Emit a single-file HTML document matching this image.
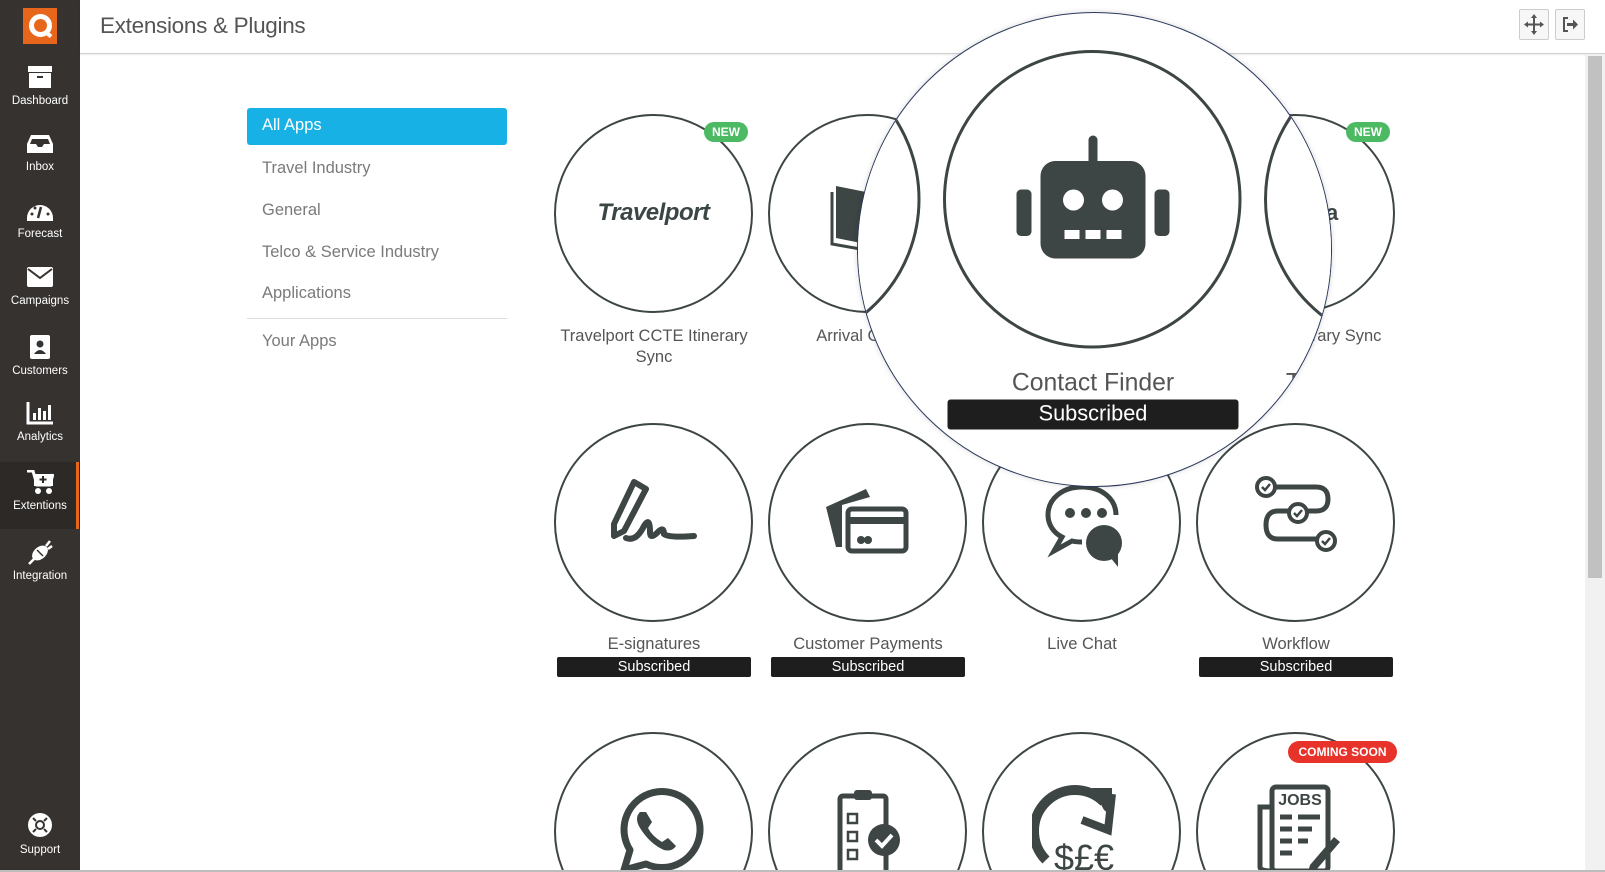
<!DOCTYPE html>
<html style="overflow:hidden;width:1605px;height:872px"><head><meta charset="utf-8"><style>
*{box-sizing:border-box;margin:0;padding:0}
html,body{width:1605px;height:872px;overflow:hidden}
body{background:#fff;font-family:"Liberation Sans",sans-serif}
#root{position:relative;width:1605px;height:872px;overflow:hidden}
.abs{position:absolute}
#side{left:0;top:0;width:80px;height:872px;background:#363230}
.si{position:absolute;left:0;width:80px;text-align:center;color:#fff;font-size:11.5px}
.si svg{display:block;margin:0 auto}
#hdr{left:80px;top:0;width:1525px;height:54px;border-bottom:1px solid #cfcfcf;box-shadow:0 1px 2px rgba(0,0,0,.08);background:#fff}
.menu{position:absolute;left:262px;font-size:16.5px;color:#7a7a7a}
.c{position:absolute;width:199px;height:199px;border:2.5px solid #3d4545;border-radius:50%;background:#fff}
.lbl{position:absolute;width:220px;text-align:center;font-size:16.5px;color:#555;line-height:21px}
.sub{position:absolute;width:194px;height:20px;background:#1e1e1e;color:#fff;text-align:center;font-size:14.5px;line-height:20px;border-radius:2px}
.new{position:absolute;width:44px;height:20px;background:#4cb963;color:#fff;border-radius:10px;font-size:12px;font-weight:bold;text-align:center;line-height:20px}
.ic{position:absolute;width:100px;height:100px}
</style></head><body><div id="root">

<div id="side" class="abs">
 <div class="abs" style="left:23px;top:8px;width:34px;height:36px;background:#e8661c">
  <div class="abs" style="left:6px;top:6px;width:23px;height:23px;border:5px solid #fff;border-radius:50%"></div>
  <div class="abs" style="left:21px;top:24px;width:8px;height:4px;background:#fff;transform:rotate(40deg)"></div>
 </div>
 <div class="si" style="top:64px"><svg width="26" height="26" viewBox="0 0 26 26"><rect x="1" y="2" width="24" height="6" fill="#fff"/><rect x="2" y="9" width="22" height="15" fill="#fff"/><rect x="10" y="12" width="6" height="2" fill="#363230"/></svg><div style="margin-top:5px">Dashboard</div></div>
 <div class="si" style="top:131px"><svg width="28" height="26" viewBox="0 0 28 26"><path d="M5 4h18l4 9v9H1v-9z" fill="#fff"/><path d="M6 8h16l2 5h-6l-2 3h-4l-2-3H4z" fill="#363230"/></svg><div style="margin-top:4px">Inbox</div></div>
 <div class="si" style="top:198px"><svg width="28" height="26" viewBox="0 0 28 26"><path d="M1 20A13 13 0 0 1 27 20v3H1z" fill="#fff"/><path d="M15 9l-3 11" stroke="#363230" stroke-width="2.5"/><circle cx="6" cy="16" r="1.5" fill="#363230"/><circle cx="22" cy="16" r="1.5" fill="#363230"/><circle cx="9" cy="10" r="1.5" fill="#363230"/></svg><div style="margin-top:4px">Forecast</div></div>
 <div class="si" style="top:265px"><svg width="28" height="24" viewBox="0 0 28 24"><rect x="1" y="2" width="26" height="20" rx="2" fill="#fff"/><path d="M2 4l12 9 12-9" stroke="#363230" stroke-width="2" fill="none"/></svg><div style="margin-top:6px">Campaigns</div></div>
 <div class="si" style="top:334px"><svg width="24" height="26" viewBox="0 0 24 26"><rect x="2" y="1" width="20" height="24" rx="2" fill="#fff"/><circle cx="12" cy="10" r="3.5" fill="#363230"/><path d="M6 20q6-8 12 0z" fill="#363230"/></svg><div style="margin-top:5px">Customers</div></div>
 <div class="si" style="top:401px"><svg width="28" height="24" viewBox="0 0 28 24"><path d="M2 1v21h25" stroke="#fff" stroke-width="3" fill="none"/><rect x="7" y="12" width="3" height="7" fill="#fff"/><rect x="12" y="7" width="3" height="12" fill="#fff"/><rect x="17" y="10" width="3" height="9" fill="#fff"/><rect x="22" y="4" width="3" height="15" fill="#fff"/></svg><div style="margin-top:6px">Analytics</div></div>
 <div class="abs" style="left:0;top:462px;width:80px;height:67px;background:#2c2927"></div>
 <div class="abs" style="left:76px;top:462px;width:3px;height:67px;background:#e8661c"></div>
 <div class="si" style="top:470px"><svg width="28" height="26" viewBox="0 0 28 26"><path d="M1 1h6l4 14h13l3-11" stroke="#fff" stroke-width="3" fill="none"/><rect x="8" y="4" width="19" height="12" fill="#fff"/><path d="M17 6v7M13.5 9.5h7" stroke="#2c2927" stroke-width="2"/><circle cx="12" cy="21" r="3" fill="#fff"/><circle cx="23" cy="21" r="3" fill="#fff"/></svg><div style="margin-top:4px">Extentions</div></div>
 <div class="si" style="top:540px"><svg width="28" height="26" viewBox="0 0 28 26"><ellipse cx="14" cy="13" rx="9" ry="6" transform="rotate(-40 14 13)" fill="#fff"/><path d="M3 24l5-5M20 6l4-5M22 9l4-3" stroke="#fff" stroke-width="2.5"/><path d="M11 10l6 6" stroke="#363230" stroke-width="1.5"/></svg><div style="margin-top:4px">Integration</div></div>
 <div class="si" style="top:812px"><svg width="26" height="26" viewBox="0 0 26 26"><circle cx="13" cy="13" r="12" fill="#fff"/><circle cx="13" cy="13" r="5" fill="#363230"/><circle cx="13" cy="13" r="3" fill="#fff"/><path d="M6 6l3 3M20 6l-3 3M6 20l3-3M20 20l-3-3" stroke="#363230" stroke-width="2"/></svg><div style="margin-top:6px">Support</div></div>
</div>

<div id="hdr" class="abs">
 <div class="abs" style="left:20px;top:13px;font-size:22.5px;color:#555;letter-spacing:-.3px">Extensions &amp; Plugins</div>
 <div class="abs" style="left:1439px;top:9px;width:30px;height:31px;border:1px solid #ccc;border-radius:2px;background:#f7f7f7"><svg width="28" height="29" viewBox="0 0 28 29"><path d="M14 6v17M6 14.5h16" stroke="#555" stroke-width="2"/><path d="M14 4l-3 4h6zM14 25l-3-4h6zM4 14.5l4-3v6zM24 14.5l-4-3v6z" fill="#555"/></svg></div>
 <div class="abs" style="left:1475px;top:9px;width:30px;height:31px;border:1px solid #ccc;border-radius:2px;background:#f7f7f7"><svg width="28" height="29" viewBox="0 0 28 29"><path d="M12 8H8v13h4" stroke="#555" stroke-width="2" fill="none"/><path d="M11 14.5h8" stroke="#555" stroke-width="3"/><path d="M22 14.5l-5-5v10z" fill="#555"/></svg></div>
</div>

<div class="abs" style="left:1585px;top:54px;width:20px;height:818px;background:#f1f1f1"></div>
<div class="abs" style="left:1588px;top:56px;width:14px;height:522px;background:#c1c1c1"></div>

<div class="abs" style="left:247px;top:108px;width:260px;height:37px;background:#18b1e6;border-radius:3px;color:#fff;font-size:16.5px;padding:8px 0 0 15px">All Apps</div>
<div class="menu" style="top:159px">Travel Industry</div>
<div class="menu" style="top:201px">General</div>
<div class="menu" style="top:243px">Telco &amp; Service Industry</div>
<div class="menu" style="top:284px">Applications</div>
<div class="abs" style="left:247px;top:318px;width:260px;height:1px;background:#ddd"></div>
<div class="menu" style="top:332px">Your Apps</div>

<div class="c" style="left:554px;top:114px"></div>
<div class="abs" style="left:554px;top:199px;width:199px;text-align:center;font-size:24px;font-weight:bold;font-style:italic;color:#3b4545;letter-spacing:-.5px">Travelport</div>
<div class="new" style="left:704px;top:122px">NEW</div>
<div class="lbl" style="left:544px;top:326px">Travelport CCTE Itinerary Sync</div>

<div class="c" style="left:768px;top:114px"></div>
<svg class="ic" style="left:818px;top:164px" viewBox="0 0 100 100"><path d="M18 22l30 6v52l-30-6z" fill="#3d4545"/><path d="M14 28v52l34 6" stroke="#3d4545" stroke-width="3" fill="none"/></svg>
<div class="lbl" style="left:758px;top:326px">Arrival Guides</div>

<div class="c" style="left:982px;top:114px"></div>
<div class="lbl" style="left:972px;top:326px">Contact Finder</div>
<div class="sub" style="left:985px;top:347px">Subscribed</div>

<div class="c" style="left:1196px;top:114px"></div>
<div class="abs" style="left:1196px;top:200px;width:199px;text-align:center;font-size:22px;font-weight:bold;color:#3d4545">tramada</div>
<div class="new" style="left:1346px;top:122px">NEW</div>
<div class="lbl" style="left:1186px;top:326px">Tramada Itinerary Sync</div>

<div class="c" style="left:554px;top:423px"></div>
<svg class="ic" style="left:604px;top:470px" viewBox="0 0 100 100"><path d="M30 12l12 7-22 42-10 5 0-12z" fill="none" stroke="#3d4545" stroke-width="6" stroke-linejoin="round"/><path d="M22 68q10 4 18-12q6-10 6 6q0 8 8 0q6-6 6 2q4 4 30 2" stroke="#3d4545" stroke-width="6" fill="none" stroke-linecap="round"/></svg>
<div class="lbl" style="left:544px;top:634px">E-signatures</div>
<div class="sub" style="left:557px;top:657px">Subscribed</div>

<div class="c" style="left:768px;top:423px"></div>
<svg class="ic" style="left:818px;top:471px" viewBox="0 0 100 100"><path d="M8 36l40-18 4 8-28 8v42h-6z" fill="#3d4545"/><rect x="30" y="38" width="58" height="42" rx="4" fill="#fff" stroke="#3d4545" stroke-width="5"/><rect x="30" y="46" width="58" height="7" fill="#3d4545"/><circle cx="43" cy="69" r="4" fill="#3d4545"/><circle cx="50" cy="69" r="4" fill="#3d4545"/></svg>
<div class="lbl" style="left:758px;top:634px">Customer Payments</div>
<div class="sub" style="left:771px;top:657px">Subscribed</div>

<div class="c" style="left:982px;top:423px"></div>
<svg class="ic" style="left:1036px;top:475px" viewBox="0 0 100 100"><path d="M46 12c-20 0-34 12-34 28 0 10 6 18 14 22l-8 14 18-10c4 1 7 1 10 1" stroke="#3d4545" stroke-width="5" fill="none"/><path d="M46 12c20 0 34 12 34 28" stroke="#3d4545" stroke-width="5" fill="none"/><circle cx="34" cy="38" r="5" fill="#3d4545"/><circle cx="50" cy="38" r="5" fill="#3d4545"/><circle cx="66" cy="38" r="5" fill="#3d4545"/><circle cx="68" cy="68" r="18" fill="#3d4545"/><path d="M74 82l8 10 0-14z" fill="#3d4545"/></svg>
<div class="lbl" style="left:972px;top:634px">Live Chat</div>

<div class="c" style="left:1196px;top:423px"></div>
<svg class="ic" style="left:1248px;top:473px" viewBox="0 0 100 100"><path d="M22 14h46q12 0 12 12t-12 12H30q-12 0-12 14t12 14h44" stroke="#3d4545" stroke-width="5" fill="none"/><circle cx="18" cy="14" r="9" fill="#fff" stroke="#3d4545" stroke-width="4"/><circle cx="50" cy="40" r="9" fill="#fff" stroke="#3d4545" stroke-width="4"/><circle cx="78" cy="68" r="9" fill="#fff" stroke="#3d4545" stroke-width="4"/><path d="M14 14l3 3 5-6M46 40l3 3 5-6M74 68l3 3 5-6" stroke="#3d4545" stroke-width="2.5" fill="none"/></svg>
<div class="lbl" style="left:1186px;top:634px">Workflow</div>
<div class="sub" style="left:1199px;top:657px">Subscribed</div>

<div class="c" style="left:554px;top:732px"></div>
<svg class="ic" style="left:604px;top:782px" viewBox="0 0 100 100"><path d="M20 88l6-20A38 38 0 1 1 42 82z" stroke="#3d4545" stroke-width="7" fill="none" stroke-linejoin="round"/><path d="M36 30q-6 6 0 16q10 16 24 22q8 2 12-4l-8-8-6 4q-10-6-14-14l4-6-6-10z" fill="#3d4545"/></svg>
<div class="c" style="left:768px;top:732px"></div>
<svg class="ic" style="left:818px;top:786px" viewBox="0 0 100 100"><rect x="22" y="10" width="46" height="78" rx="3" fill="none" stroke="#3d4545" stroke-width="5"/><rect x="36" y="4" width="18" height="10" rx="3" fill="#3d4545"/><rect x="30" y="28" width="9" height="9" fill="none" stroke="#3d4545" stroke-width="2.5"/><rect x="30" y="46" width="9" height="9" fill="none" stroke="#3d4545" stroke-width="2.5"/><rect x="30" y="64" width="9" height="9" fill="none" stroke="#3d4545" stroke-width="2.5"/><circle cx="66" cy="54" r="16" fill="#3d4545"/><path d="M58 54l6 6 10-11" stroke="#fff" stroke-width="4" fill="none"/></svg>
<div class="c" style="left:982px;top:732px"></div>
<svg class="ic" style="left:1032px;top:780px" viewBox="0 0 100 100"><path d="M72 22A38 38 0 1 0 14 80" stroke="#3d4545" stroke-width="10" fill="none"/><path d="M60 8h20v28l-8-6z" fill="#3d4545"/><path d="M50 40l26 10 4-36" stroke="#3d4545" stroke-width="8" fill="none"/><text x="52" y="90" font-size="36" font-family="Liberation Sans" fill="#3d4545" text-anchor="middle">$£€</text></svg>
<div class="c" style="left:1196px;top:732px"></div>
<svg class="ic" style="left:1246px;top:781px" viewBox="0 0 100 100"><rect x="26" y="6" width="56" height="84" rx="4" fill="#fff" stroke="#3d4545" stroke-width="5"/><path d="M26 26H14v60q0 4 12 4" stroke="#3d4545" stroke-width="5" fill="none"/><text x="54" y="24" font-size="16" font-weight="bold" font-family="Liberation Sans" fill="#3d4545" text-anchor="middle">JOBS</text><path d="M34 36h12M52 36h22M34 48h12M52 48h14M34 60h12M52 60h10M34 72h12" stroke="#3d4545" stroke-width="5"/><path d="M64 84l24-28 6 5-24 28-8 2z" fill="#3d4545"/></svg>
<div class="abs" style="left:1288px;top:741px;width:109px;height:22px;background:#e8332b;color:#fff;border-radius:11px;font-size:12px;font-weight:bold;text-align:center;line-height:22px">COMING SOON</div>

<div class="abs" style="left:0;top:870px;width:1605px;height:2px;background:#bdbdbd"></div>

<div class="abs" style="left:857px;top:12px;width:475px;height:475px;border-radius:50%;overflow:hidden;border:1.5px solid #2d3a5e;background:#fff;box-shadow:0 0 6px rgba(0,0,0,.15)">
 <div class="abs" style="left:-858.5px;top:-13.5px;width:1605px;height:872px;transform:translate(-530px,-121px) scale(1.5);transform-origin:0 0">
  <div class="c" style="left:768px;top:114px"></div>
  <svg class="ic" style="left:818px;top:164px" viewBox="0 0 100 100"><path d="M18 22l30 6v52l-30-6z" fill="#3d4545"/><path d="M14 28v52l34 6" stroke="#3d4545" stroke-width="3" fill="none"/></svg>
  <div class="c" style="left:982px;top:114px"></div>
  <svg class="abs" style="left:1027px;top:159px" width="110" height="110" viewBox="0 0 110 110"><rect x="52" y="12" width="6" height="20" rx="3" fill="#3d4545"/><rect x="20" y="29" width="70" height="65" rx="10" fill="#3d4545"/><rect x="4" y="48" width="10" height="31" rx="3" fill="#3d4545"/><rect x="96" y="48" width="10" height="31" rx="3" fill="#3d4545"/><circle cx="42" cy="55" r="7" fill="#fff"/><circle cx="68" cy="55" r="7" fill="#fff"/><rect x="36" y="75" width="10" height="6" fill="#fff"/><rect x="50" y="75" width="10" height="6" fill="#fff"/><rect x="64" y="75" width="10" height="6" fill="#fff"/></svg>
  <div class="new" style="left:1113px;top:53px">NEW</div>
  <div class="lbl" style="left:972px;top:326px">Contact Finder</div>
  <div class="sub" style="left:985px;top:347px">Subscribed</div>
  <div class="c" style="left:1196px;top:114px"></div>
  <div class="abs" style="left:1196px;top:200px;width:199px;text-align:center;font-size:22px;font-weight:bold;color:#3d4545">tramada</div>
  <div class="lbl" style="left:1186px;top:326px">Tramada Itinerary Sync</div>
 </div>
</div>
</div></body></html>
